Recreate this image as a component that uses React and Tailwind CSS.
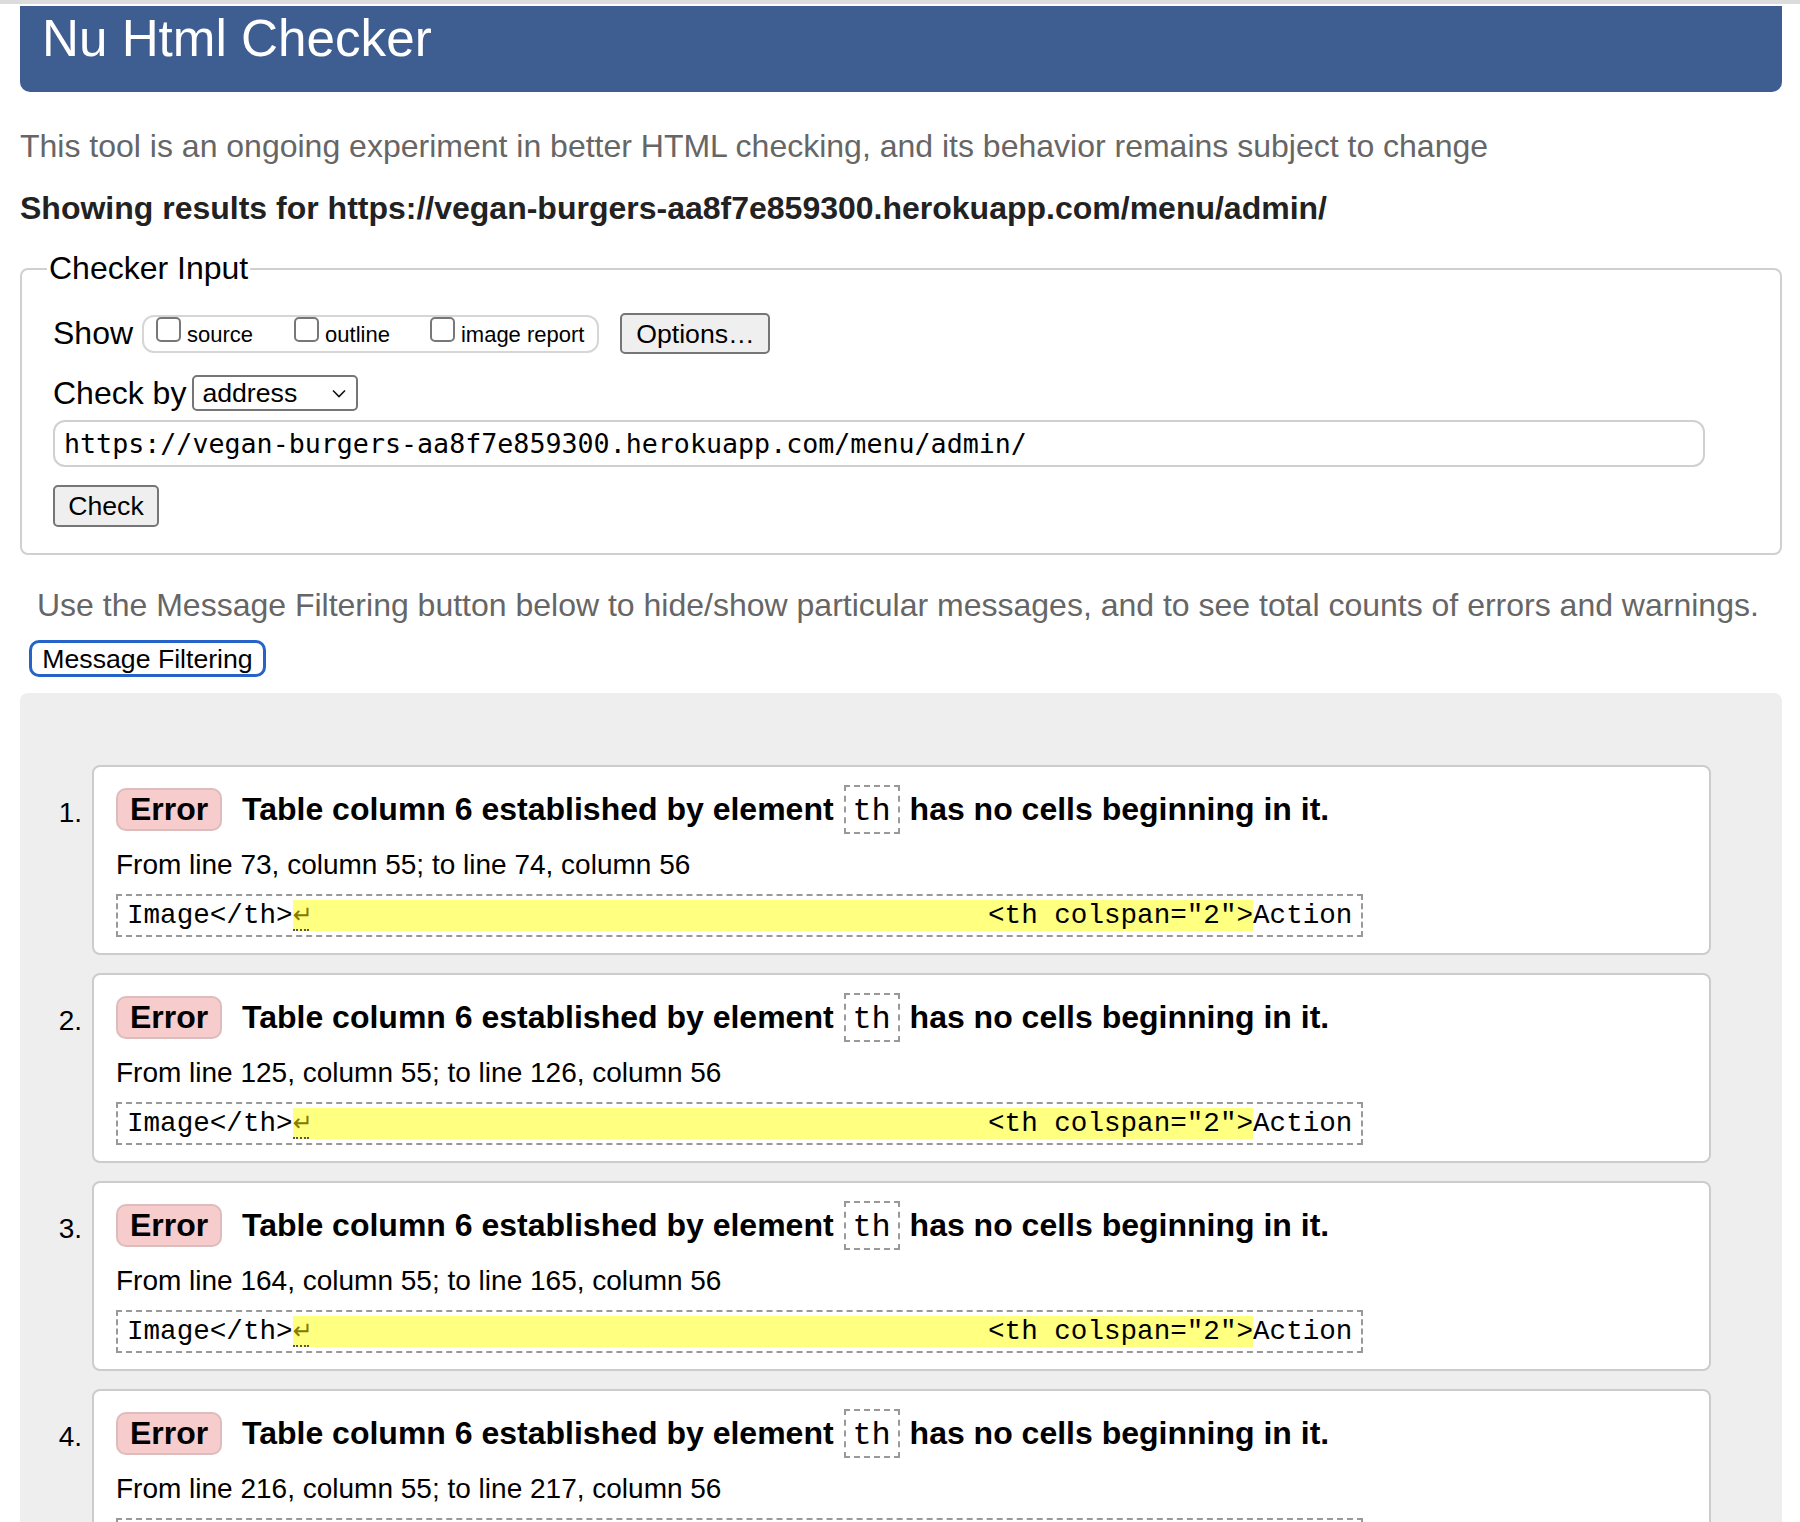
export default function App() {
  const items = [
    "From line 73, column 55; to line 74, column 56",
    "From line 125, column 55; to line 126, column 56",
    "From line 164, column 55; to line 165, column 56",
    "From line 216, column 55; to line 217, column 56",
  ];
  const spaces = " ".repeat(41);
  return (
    <div className="h-[1522px] overflow-hidden bg-white font-['Liberation_Sans',Arial,sans-serif] text-black">
      <div className="h-[4px] bg-[#dcdcdc]" />
      <div className="ml-[20px] w-[1762px]">
        <header className="mt-[2px] h-[86px] rounded-b-[10px] bg-[#3e5d91] pl-[22px] pt-[4px]">
          <h1 className="text-[51.2px] leading-[58px] text-white">Nu Html Checker</h1>
        </header>

        <p className="mt-[36px] text-[32px] leading-[37px] text-[#666]">
          This tool is an ongoing experiment in better HTML checking, and its behavior remains subject to change
        </p>
        <p className="mt-[25px] text-[32px] font-bold leading-[37px] text-[#222]">
          Showing results for https://vegan-burgers-aa8f7e859300.herokuapp.com/menu/admin/
        </p>

        <fieldset className="mt-[23px] rounded-[8px] border-2 border-[#d0d0d0] pb-[26px] pl-[31px] pr-[20px] pt-[26px]">
          <legend className="ml-[-6px] px-[2px] text-[32px] leading-[37px]">Checker Input</legend>

          <div className="flex h-[41px] items-center">
            <span className="text-[32px] leading-[37px]">Show</span>
            <div className="ml-[9px] flex h-[38px] items-start rounded-[12px] border-2 border-[#d6d6d6] pl-[12px] pr-[13px]">
              <span className="flex items-start">
                <span className="h-[25px] w-[25px] rounded-[5px] border-2 border-[#777]" />
                <span className="ml-[6px] mt-[5px] text-[22px] leading-[26px]">source</span>
              </span>
              <span className="ml-[41px] flex items-start">
                <span className="h-[25px] w-[25px] rounded-[5px] border-2 border-[#777]" />
                <span className="ml-[6px] mt-[5px] text-[22px] leading-[26px]">outline</span>
              </span>
              <span className="ml-[40px] flex items-start">
                <span className="h-[25px] w-[25px] rounded-[5px] border-2 border-[#777]" />
                <span className="ml-[6px] mt-[5px] text-[22px] leading-[26px]">image report</span>
              </span>
            </div>
            <button className="ml-[21px] flex h-[41px] w-[150px] items-center justify-center rounded-[5px] border-2 border-[#767676] bg-[#efefef] text-[26.67px] leading-[30px]">
              Options…
            </button>
          </div>

          <div className="mt-[21px] flex h-[36px] items-center">
            <span className="text-[32px] leading-[37px]">Check by</span>
            <div className="ml-[6px] flex h-[36px] w-[166px] items-center justify-between rounded-[5px] border-2 border-[#767676] pl-[8px] pr-[10px]">
              <span className="text-[26.67px] leading-[30px]">address</span>
              <svg width="14" height="9" viewBox="0 0 14 9" fill="none">
                <polyline points="1,1.5 7,7.5 13,1.5" stroke="#111" strokeWidth="1.6" />
              </svg>
            </div>
          </div>

          <div className="mt-[9px] flex h-[47px] w-[1652px] items-center rounded-[12px] border-2 border-[#d0d0d0] pl-[9px] font-['DejaVu_Sans_Mono',monospace] text-[26.67px] leading-[30px]">
            https://vegan-burgers-aa8f7e859300.herokuapp.com/menu/admin/
          </div>

          <button className="mt-[18px] flex h-[42px] w-[106px] items-center justify-center rounded-[5px] border-2 border-[#767676] bg-[#efefef] text-[26.67px] leading-[30px]">
            Check
          </button>
        </fieldset>

        <p className="ml-[17px] mt-[32px] text-[32px] leading-[37px] text-[#666]">
          Use the Message Filtering button below to hide/show particular messages, and to see total counts of errors and warnings.
        </p>
        <button className="ml-[9px] mt-[16px] flex h-[37px] w-[237px] items-center justify-center rounded-[10px] border-[3px] border-[#2563c9] bg-white text-[26.67px] leading-[30px]">
          Message Filtering
        </button>

        <div className="mt-[16px] flex flex-col gap-[18px] rounded-t-[8px] bg-[#eeeeee] pb-[40px] pt-[72px]">
          {items.map((from, i) => (
            <div key={i} className="flex">
              <div className="w-[72px] pr-[10px] pt-[32px] text-right text-[28px] leading-[32px]">{i + 1}.</div>
              <div className="w-[1619px] rounded-[8px] border-2 border-[#cccccc] bg-white pb-[16px] pl-[22px] pt-[18px]">
                <div className="flex h-[49px] items-center text-[32px] font-bold leading-[37px]">
                  <span className="flex h-[43px] w-[106px] items-center justify-center rounded-[10px] border-2 border-[#dcbcbc] bg-[#f7cccc]">
                    Error
                  </span>
                  <span className="ml-[20px]">Table column 6 established by element</span>
                  <span className="ml-[10px] flex h-[49px] w-[56px] items-center justify-center border-2 border-dashed border-[#999] pt-[3px] font-['Liberation_Mono',monospace] font-normal">
                    th
                  </span>
                  <span className="ml-[10px]">has no cells beginning in it.</span>
                </div>
                <div className="mt-[15px] text-[28px] leading-[32px]">{from}</div>
                <div className="mt-[13px] flex h-[43px] w-[1247px] items-center whitespace-pre border-2 border-dashed border-[#999] pl-[9px] font-['Liberation_Mono',monospace] text-[27.6px] leading-[31px]">
                  <span>Image&lt;/th&gt;</span>
                  <span className="bg-[#ffff80]">
                    <span className="inline-block w-[16.56px] border-b-2 border-dotted border-[#555] text-center font-['DejaVu_Sans',sans-serif] text-[24px] leading-[28px] text-[#7f7a00]">↵</span>
                    {spaces}
                    {'<th colspan="2">'}
                  </span>
                  <span>Action</span>
                </div>
              </div>
            </div>
          ))}
        </div>
      </div>
    </div>
  );
}
